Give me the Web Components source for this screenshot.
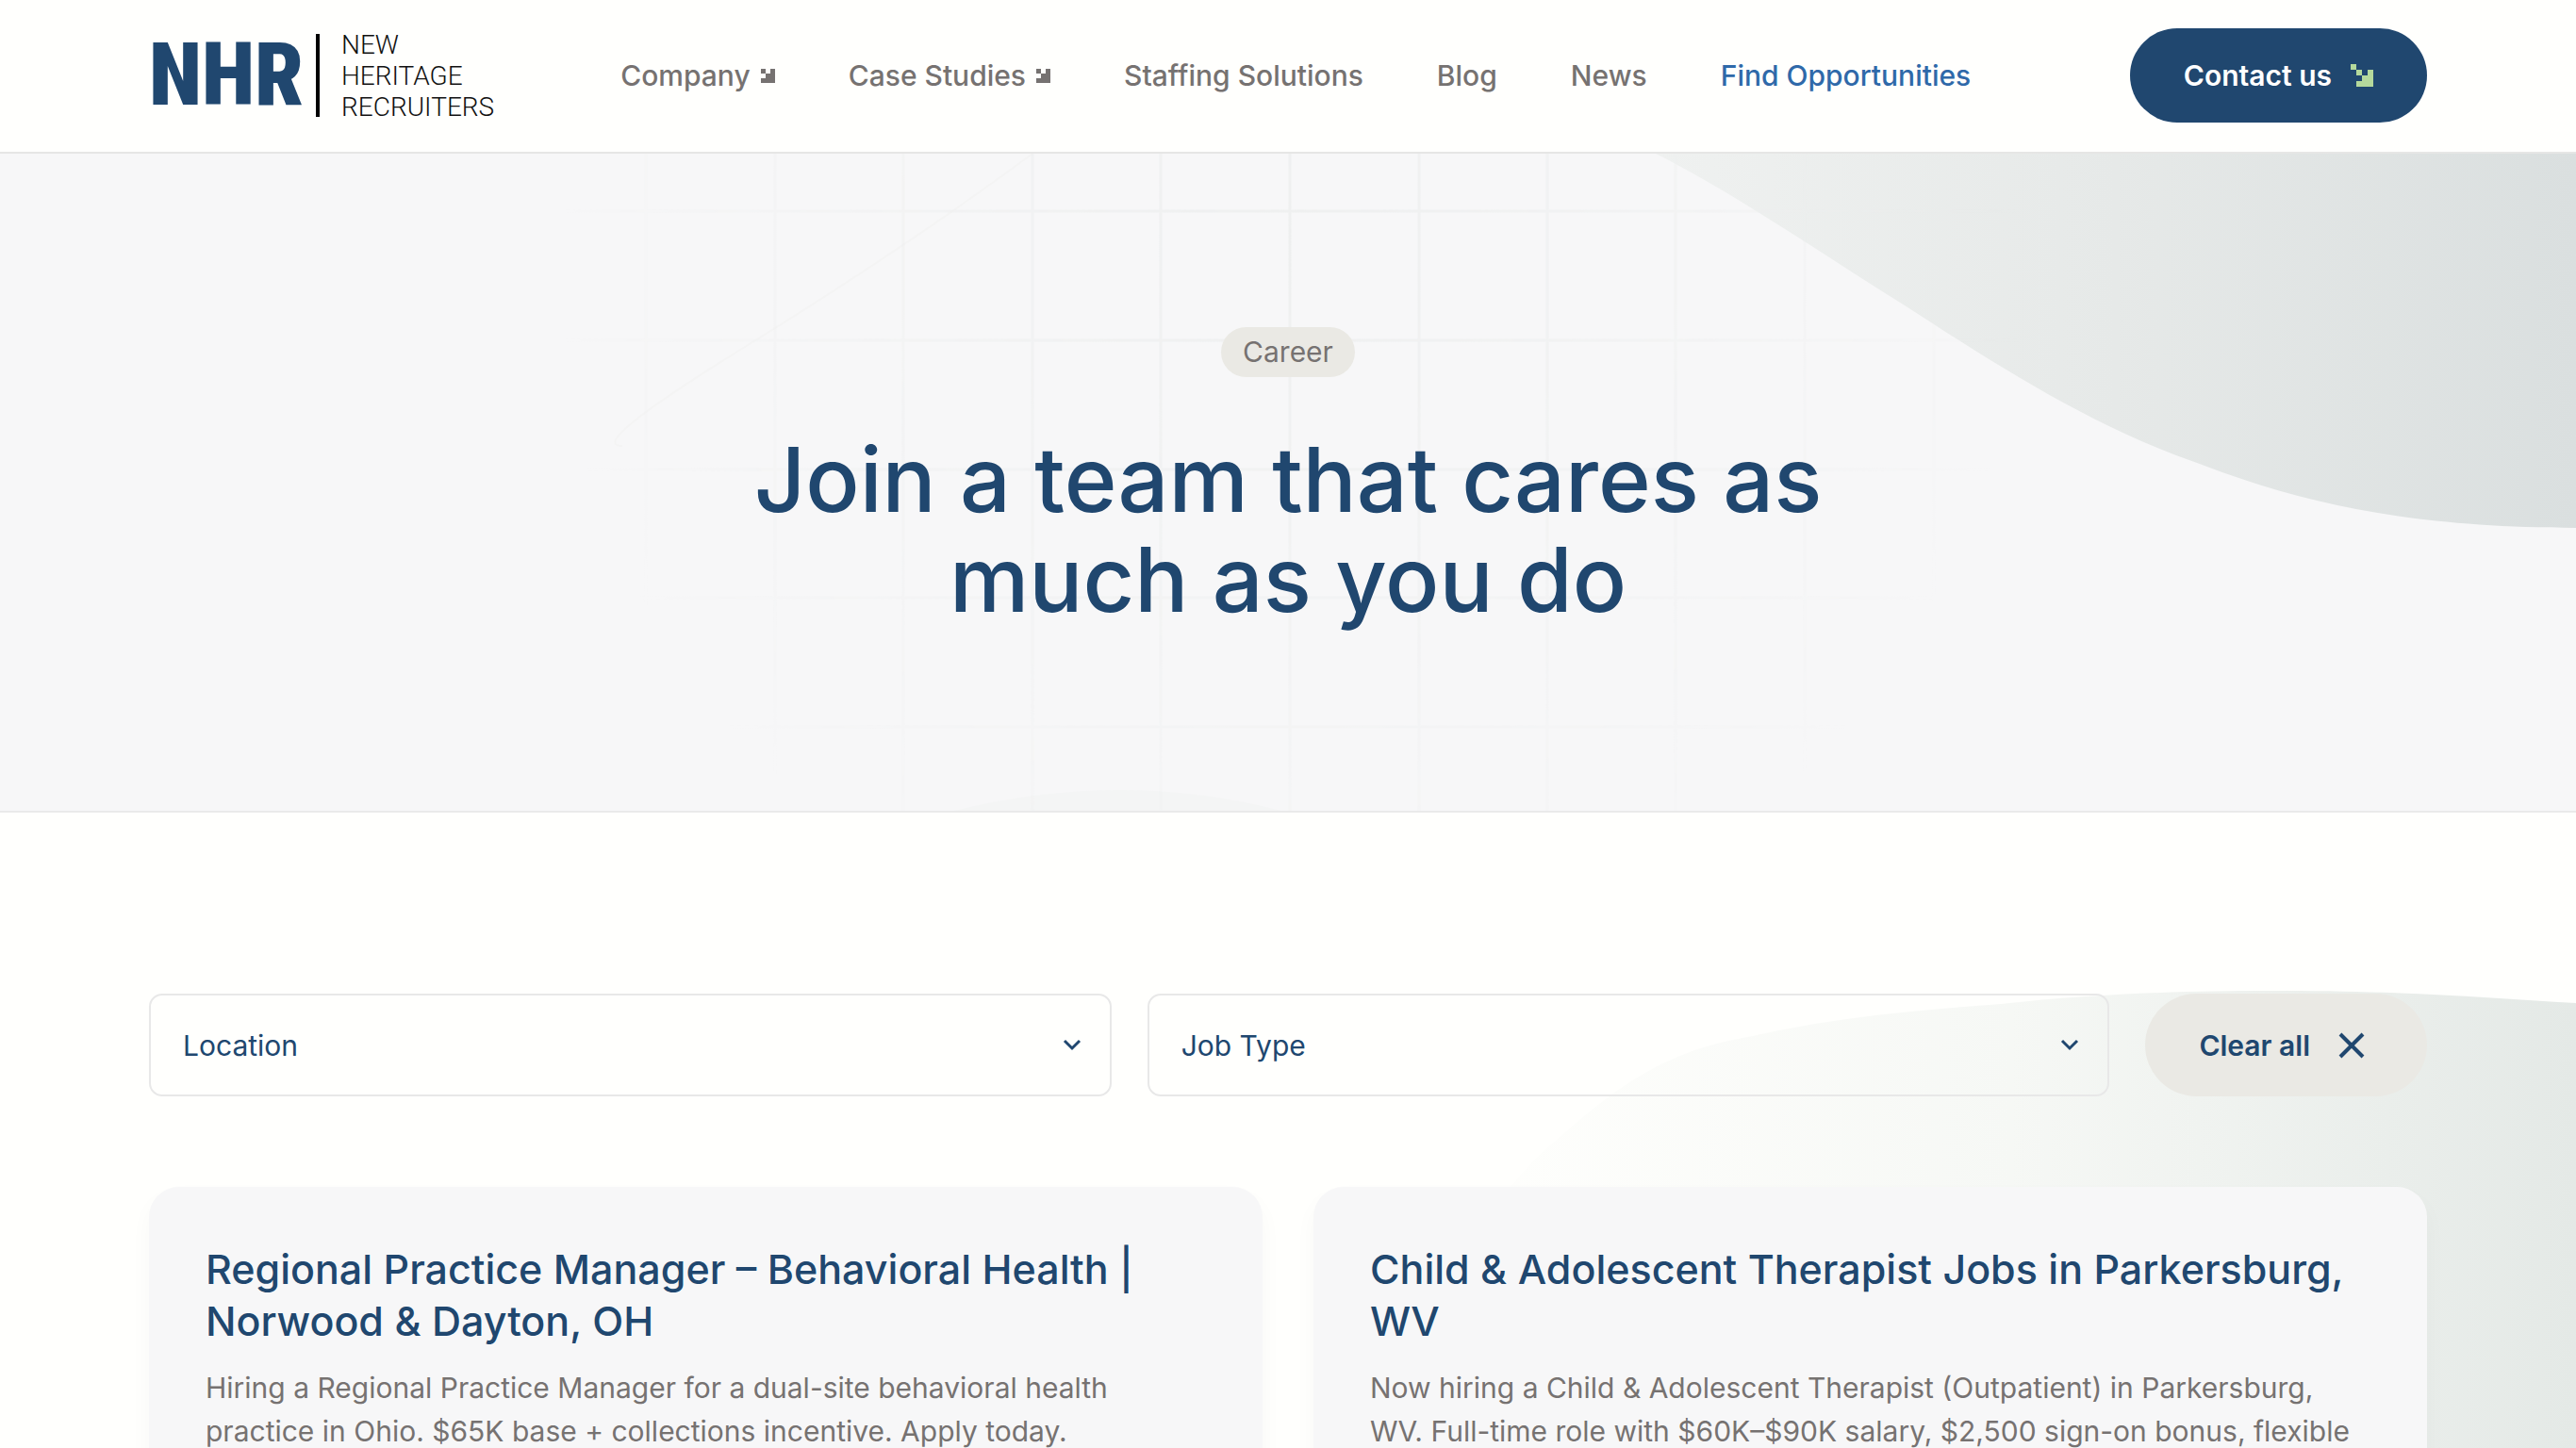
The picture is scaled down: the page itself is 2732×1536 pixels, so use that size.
<!DOCTYPE html>
<html lang="en">
<head>
<meta charset="utf-8">
<meta name="viewport" content="width=device-width, initial-scale=1">
<title>Career - New Heritage Recruiters</title>
<style>
    body {
        margin: 0;
        background: #fffffd;
        color: #767271;
        font-family: Inter, "Open Sans", sans-serif;
        font-size: 30px;
        --navy: #20476f;
        --blue: #2f69a9;
        --sand: #eae9e4;
        --light: #f7f7f8;
        --line: #e8e8e8;
        --side: 158px;
    }
</style>
</head>
<body>
    <nhr-header>
        <nhr-logo slot="logo"></nhr-logo>
        <nhr-nav-link href="#company" menu>Company</nhr-nav-link>
        <nhr-nav-link href="#cases" menu>Case Studies</nhr-nav-link>
        <nhr-nav-link href="#staffing">Staffing Solutions</nhr-nav-link>
        <nhr-nav-link href="#blog">Blog</nhr-nav-link>
        <nhr-nav-link href="#news">News</nhr-nav-link>
        <nhr-nav-link href="#jobs" active>Find Opportunities</nhr-nav-link>
    </nhr-header>
    <main>
        <nhr-hero tag="Career">Join a team that cares as<br>much as you do</nhr-hero>
        <nhr-jobs>
            <nhr-filter slot="filters" label="Location" options="Ohio,West Virginia"></nhr-filter>
            <nhr-filter slot="filters" label="Job Type" options="Full-time,Part-time"></nhr-filter>
            <nhr-job-card card-title="Regional Practice Manager – Behavioral Health | Norwood &amp; Dayton, OH">
                Hiring a Regional Practice Manager for a dual-site behavioral health<br>practice in Ohio. $65K base + collections incentive. Apply today.
            </nhr-job-card>
            <nhr-job-card card-title="Child &amp; Adolescent Therapist Jobs in Parkersburg, WV">
                Now hiring a Child &amp; Adolescent Therapist (Outpatient) in Parkersburg,<br>WV. Full-time role with $60K–$90K salary, $2,500 sign-on bonus, flexible
            </nhr-job-card>
        </nhr-jobs>
    </main>

<script>
class NhrLogo extends HTMLElement {
    constructor() {
        super();
        this.attachShadow({ mode: 'open' });
        this.shadowRoot.innerHTML = `<style>
        :host {
            display: block;
        }
        a {
            display: flex;
            align-items: center;
            text-decoration: none;
        }
        .mark {
            width: 158px;
            color: var(--navy);
            font: 900 92px/88px "Roboto Condensed", "Liberation Sans Narrow", "Liberation Sans", sans-serif;
        }
        .bar {
            width: 4px;
            height: 88px;
            margin: 0 23px 0 19px;
            background: #000;
        }
        .name {
            color: #111;
            font: 300 28px/33px Roboto, sans-serif;
        }
        </style>
        <a href="#home">
            <span class="mark">NHR</span>
            <span class="bar"></span>
            <span class="name">NEW<br>HERITAGE<br>RECRUITERS</span>
        </a>
        `;
    }
}

class NhrNavLink extends HTMLElement {
    constructor() {
        super();
        this.attachShadow({ mode: 'open' });
        this.shadowRoot.innerHTML = `<style>
        :host {
            display: block;
        }
        a {
            display: flex;
            align-items: center;
            gap: 11px;
            color: inherit;
            font-weight: 500;
            line-height: 40px;
            text-decoration: none;
            white-space: nowrap;
        }
        :host([active]) a {
            color: var(--blue);
        }
        svg {
            display: none;
            width: 15px;
            height: 15px;
            fill: currentColor;
        }
        :host([menu]) svg {
            display: block;
        }
        </style>
        <a><slot></slot><svg viewBox="0 0 3 3" shape-rendering="crispEdges" aria-hidden="true"><path d="M0 0h1v1H0zM2 0h1v3H0V2h1V1h1z"/></svg></a>
        `;
    }

    connectedCallback() {
        this.shadowRoot.querySelector('a').href = this.getAttribute('href') || '#';
    }
}

class NhrHeader extends HTMLElement {
    constructor() {
        super();
        this.attachShadow({ mode: 'open' });
        this.shadowRoot.innerHTML = `<style>
        :host {
            display: block;
        }
        header {
            display: flex;
            align-items: center;
            padding: 30px var(--side) 31px;
            border-bottom: 2px solid #e6e6e5;
        }
        nav {
            display: flex;
            gap: 78px;
            margin-left: 134px;
        }
        button {
            display: flex;
            align-items: center;
            gap: 20px;
            height: 100px;
            margin-left: auto;
            padding: 0 57px;
            border: 0;
            border-radius: 50px;
            background: var(--navy);
            color: #fff;
            font: 600 30px Inter, sans-serif;
            white-space: nowrap;
        }
        svg {
            width: 24px;
            height: 24px;
            fill: #b5d99c;
        }
        </style>
        <header>
            <slot name="logo"></slot>
            <nav><slot></slot></nav>
            <button type="button">Contact us
                <svg viewBox="0 0 4 4" aria-hidden="true"><path d="M0 0h1v1H0zM1 1h1v1H1zM3 1h1v3H1V3h1V2h1z"/></svg>
            </button>
        </header>
        `;
    }
}

class NhrHero extends HTMLElement {
    constructor() {
        super();
        this.attachShadow({ mode: 'open' });
        this.shadowRoot.innerHTML = `<style>
        :host {
            display: block;
        }
        section {
            position: relative;
            overflow: hidden;
            display: flex;
            flex-direction: column;
            align-items: center;
            gap: 56px;
            padding: 184px var(--side) 192px;
            border-bottom: 2px solid #eaeaea;
            background: var(--light);
        }
        svg {
            position: absolute;
            top: 0;
            left: 50%;
            width: 2732px;
            height: 700px;
            margin-left: -1366px;
        }
        .tag {
            position: relative;
            padding: 0 23px;
            border-radius: 27px;
            background: var(--sand);
            line-height: 53px;
        }
        h1 {
            position: relative;
            margin: 0;
            color: var(--navy);
            font-size: 95px;
            font-weight: 500;
            line-height: 106px;
            text-align: center;
        }
        </style>
        <section>
            <svg viewBox="0 0 2732 700" aria-hidden="true">
                <defs>
                    <linearGradient id="wave" x1="0" x2="1">
                        <stop offset="0" stop-color="#eff1f0"/>
                        <stop offset=".5" stop-color="#e6e9e8"/>
                        <stop offset="1" stop-color="#dadfdf"/>
                    </linearGradient>
                    <radialGradient id="fade" gradientUnits="userSpaceOnUse" cx="1366" cy="100" r="780">
                        <stop offset="0" stop-color="#fff"/>
                        <stop offset="1" stop-color="#000"/>
                    </radialGradient>
                    <mask id="round"><rect width="2732" height="700" fill="url(#fade)"/></mask>
                </defs>
                <path fill="url(#wave)" d="M1756 0C1840 42 1930 105 2020 161C2120 226 2220 290 2330 328C2450 374 2560 396 2732 397V0z"/>
                <path fill="none" stroke="#f4f4f4" stroke-width="2" d="M1095 0Q960 100 790 205T660 310"/>
                <path fill="#f4f5f5" d="M1000 700Q1190 650 1370 700z"/>
                <path mask="url(#round)" fill="none" stroke="#eeefef" stroke-width="3" d="M685 0V700M822 0V700M958 0V700M1095 0V700M1231 0V700M1368 0V700M1505 0V700M1641 0V700M1777 0V700M1914 0V700M2051 0V700M600 61H2140M600 198H2140M600 335H2140M600 471H2140M600 608H2140"/>
            </svg>
            <span class="tag"></span>
            <h1><slot></slot></h1>
        </section>
        `;
    }

    connectedCallback() {
        this.shadowRoot.querySelector('.tag').textContent = this.getAttribute('tag');
    }
}

class NhrFilter extends HTMLElement {
    constructor() {
        super();
        this.attachShadow({ mode: 'open' });
        this.shadowRoot.innerHTML = `<style>
        :host {
            display: grid;
            flex: 1;
            align-items: center;
        }
        select, svg {
            grid-area: 1 / 1;
        }
        select {
            appearance: none;
            width: 100%;
            height: 109px;
            padding: 0 34px;
            border: 2px solid var(--line);
            border-radius: 14px;
            background: transparent;
            color: var(--navy);
            font: 400 30px Inter, sans-serif;
        }
        svg {
            justify-self: end;
            width: 20px;
            height: 14px;
            margin-right: 32px;
            pointer-events: none;
        }
        </style>
        <select></select>
        <svg viewBox="0 0 20 14" aria-hidden="true"><path d="M2 2l8 8 8-8" fill="none" stroke="#20476f" stroke-width="3"/></svg>
        `;
    }

    connectedCallback() {
        const select = this.shadowRoot.querySelector('select');
        const label = this.getAttribute('label');
        select.setAttribute('aria-label', label);
        select.add(new Option(label, ''));
        this.getAttribute('options').split(',').forEach(name => select.add(new Option(name)));
    }

    clear() {
        this.shadowRoot.querySelector('select').selectedIndex = 0;
    }
}

class NhrJobs extends HTMLElement {
    constructor() {
        super();
        this.attachShadow({ mode: 'open' });
        this.shadowRoot.innerHTML = `<style>
        :host {
            display: block;
        }
        section {
            position: relative;
            overflow: hidden;
            padding: 192px var(--side) 96px;
        }
        .shape {
            position: absolute;
            top: 180px;
            right: 0;
            width: 1200px;
            height: 1000px;
        }
        .filters {
            position: relative;
            display: flex;
            gap: 38px;
            margin-bottom: 96px;
        }
        button {
            display: flex;
            align-items: center;
            gap: 30px;
            height: 109px;
            padding: 0 66px 0 57px;
            border: 0;
            border-radius: 55px;
            background: var(--sand);
            color: var(--navy);
            font: 600 30px Inter, sans-serif;
            white-space: nowrap;
        }
        button svg {
            width: 28px;
            height: 28px;
        }
        .cards {
            position: relative;
            display: grid;
            grid-template-columns: 1fr 1fr;
            gap: 54px;
        }
        </style>
        <section>
            <svg class="shape" viewBox="0 0 1200 1000" aria-hidden="true">
                <defs>
                    <linearGradient id="hill" x1="0" x2="1" y1="0" y2="0">
                        <stop offset="0" stop-color="#fffffd"/>
                        <stop offset=".5" stop-color="#f6f8f5"/>
                        <stop offset="1" stop-color="#e4e9e6"/>
                    </linearGradient>
                </defs>
                <path fill="url(#hill)" d="M0 340C40 240 90 190 127 160C200 95 250 70 327 57C420 36 500 30 590 23C700 11 800 9 870 9C1000 8 1100 16 1200 22V1000H0z"/>
            </svg>
            <div class="filters">
                <slot name="filters"></slot>
                <button type="button">Clear all
                    <svg viewBox="0 0 28 28" aria-hidden="true"><path d="M2 2l24 24M26 2L2 26" fill="none" stroke="#20476f" stroke-width="4"/></svg>
                </button>
            </div>
            <div class="cards"><slot></slot></div>
        </section>
        `;
    }

    connectedCallback() {
        this.shadowRoot.querySelector('button').addEventListener('click', () => {
            this.querySelectorAll('nhr-filter').forEach(filter => filter.clear());
        });
    }
}

class NhrJobCard extends HTMLElement {
    constructor() {
        super();
        this.attachShadow({ mode: 'open' });
        this.shadowRoot.innerHTML = `<style>
        :host {
            display: block;
        }
        article {
            padding: 60px;
            border-radius: 32px;
            background: var(--light);
            box-shadow: 0 12px 24px rgba(0, 0, 0, .03);
        }
        h2 {
            margin: 0 0 20px;
            color: var(--navy);
            font-size: 43px;
            font-weight: 500;
            line-height: 55px;
        }
        p {
            margin: 0;
            line-height: 46px;
        }
        </style>
        <article>
            <h2></h2>
            <p><slot></slot></p>
        </article>
        `;
    }

    connectedCallback() {
        this.shadowRoot.querySelector('h2').textContent = this.getAttribute('card-title');
    }
}

window.customElements.define('nhr-logo', NhrLogo);
window.customElements.define('nhr-nav-link', NhrNavLink);
window.customElements.define('nhr-header', NhrHeader);
window.customElements.define('nhr-hero', NhrHero);
window.customElements.define('nhr-filter', NhrFilter);
window.customElements.define('nhr-jobs', NhrJobs);
window.customElements.define('nhr-job-card', NhrJobCard);
</script>
</body>
</html>
